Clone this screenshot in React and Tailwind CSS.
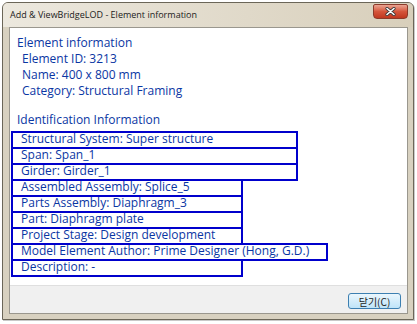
import React from 'react';

const identRows = [
    { text: 'Structural System: Super structure', w: 'w-[287px]' },
    { text: 'Span: Span_1', w: 'w-[287px]' },
    { text: 'Girder: Girder_1', w: 'w-[287px]' },
    { text: 'Assembled Assembly: Splice_5', w: 'w-[232px]' },
    { text: 'Parts Assembly: Diaphragm_3', w: 'w-[232px]' },
    { text: 'Part: Diaphragm plate', w: 'w-[232px]' },
    { text: 'Project Stage: Design development', w: 'w-[232px]' },
    { text: 'Model Element Author: Prime Designer (Hong, G.D.)', w: 'w-[317px]' },
    { text: 'Description: -', w: 'w-[232px]' }
];

function CloseButton() {
    return (
        <div className="mt-[1px] mr-[5px] flex h-[15px] w-[35px] items-center justify-center rounded-b-[4px] rounded-t-[2px] border border-[#8c3a2a] bg-gradient-to-b from-[#e9a492] via-[#d5553b] to-[#c0371f]">
            <svg width="11" height="9" viewBox="0 0 11 9">
                <path d="M2 1.5 L9 7.5 M9 1.5 L2 7.5" stroke="#3a3a3a" strokeWidth="3.2" strokeLinecap="round" />
                <path d="M2 1.5 L9 7.5 M9 1.5 L2 7.5" stroke="#ffffff" strokeWidth="1.6" strokeLinecap="round" />
            </svg>
        </div>
    );
}

export default function App() {
    return (
        <div className="h-[324px] w-[417px] overflow-hidden bg-white pl-[2px] pt-[2px]" style={{ fontFamily: '"Open Sans", sans-serif' }}>
            <div className="flex h-[318px] w-[412px] flex-col rounded-t-[6px] border border-[#6b6658] bg-[#d8d1c0] shadow-[1px_1px_0_#c9c9c9]">
                {/* title bar */}
                <div className="flex h-[24px] items-start justify-between rounded-t-[5px] bg-gradient-to-r from-[#ece8de] to-[#d8cfbb]">
                    <span className="ml-[7px] mt-[6px] text-[9px] leading-[12px] text-[#1b1b1b]">
                        Add &amp; ViewBridgeLOD - Element information
                    </span>
                    <CloseButton />
                </div>

                {/* client area */}
                <div className="ml-[6px] mr-[5px] flex flex-1 flex-col border border-[#9a978e]">
                    <div className="flex h-[257px] flex-col bg-white text-[12px] leading-[16px] text-[#0a36a3]">
                        <div className="pl-[7px] pt-[7px]">Element information</div>
                        <div className="pl-[12px]">Element ID: 3213</div>
                        <div className="pl-[12px]">Name: 400 x 800 mm</div>
                        <div className="pl-[12px]">Category: Structural Framing</div>
                        <div className="mt-[13px] pl-[7px]">Identification Information</div>

                        <div className="ml-[1px] mt-[3px] flex flex-col">
                            {identRows.map((row, i) => (
                                <div
                                    key={row.text}
                                    className={`${row.w} ${i === 0 ? '' : '-mt-[2px]'} h-[18px] border-2 border-[#0000cc]`}
                                >
                                    <div className="-mt-[2px] whitespace-nowrap pl-[8px] leading-[16px]">{row.text}</div>
                                </div>
                            ))}
                        </div>
                    </div>

                    <div className="flex flex-1 justify-end border-t border-[#dfdfdf] bg-[#f0f0f0] pr-[6px] pt-[7px]">
                        <button
                            className="flex h-[16px] w-[53px] items-center justify-center rounded-[3px] border border-[#3c7fb1] bg-gradient-to-b from-[#eaf6fd] to-[#bfe4f8] text-[10px] text-[#222]"
                            style={{ fontFamily: '"Noto Sans CJK KR", sans-serif' }}
                        >
                            닫기(C)
                        </button>
                    </div>
                </div>
                <div className="h-[5px]" />
            </div>
        </div>
    );
}
